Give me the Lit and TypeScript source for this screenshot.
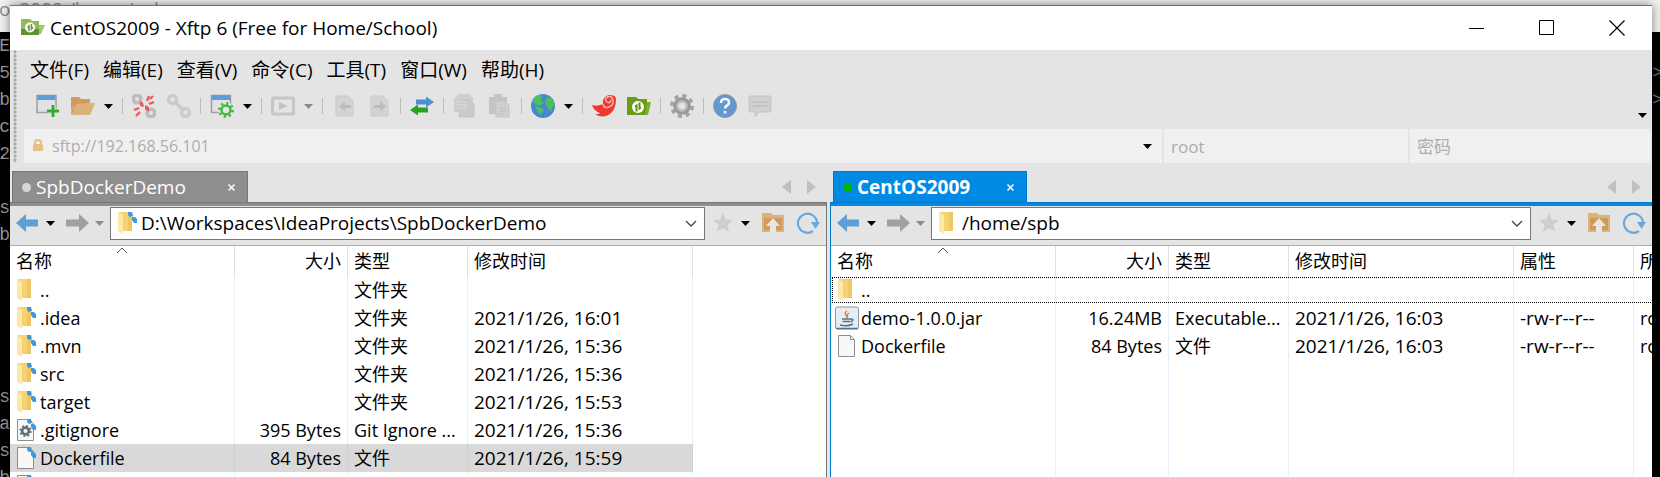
import { LitElement, html, svg, css, nothing } from "lit";
import { customElement, property } from "lit/decorators.js";
import { classMap } from "lit/directives/class-map.js";

const FONT = css`"Open Sans", "Noto Sans CJK SC", sans-serif`;

const shapes: Record<string, unknown> = {
  app: svg`<path d="M0 3h9l2 2h7v14H0z" fill="#8fbb58"/><path d="M0 13h18v6H0z" fill="#5d9133"/><path d="M18 9h6l-4 9h-2z" fill="#a3c763"/><circle cx="9" cy="11.500" r="5" fill="#fff"/><path d="M8 15v-5l-1.500 1.500M10.500 8v5l1.500-1.500" stroke="#5d9133" stroke-width="1.500" fill="none"/>`,
  newSession: svg`<path d="M1 1.500h19v17H1z" fill="#e2e2e4" stroke="#9a9fa6" stroke-width="1.500"/><path d="M1.500 1h18v5h-18z" fill="#5c9fd8"/><path d="M17 11v12M11 17h12" stroke="#e5e5e5" stroke-width="5"/><path d="M17 11v12M11 17h12" stroke="#2fae2a" stroke-width="2.800"/>`,
  open: svg`<path d="M0 3h8l2 2h9v5H5L0 20z" fill="#cf9c5d"/><path d="M5 9h19l-5 12H0V14z" fill="#dbb27a"/><path d="M1 19 5 9h9" stroke="#c99457" fill="none"/>`,
  disconnect: svg`<g fill="none" stroke="#bdbdbd" stroke-width="3.600"><circle cx="5" cy="5" r="3.800"/><circle cx="19" cy="19" r="3.800"/><path d="M7 7l3 3M14 14l3 3"/></g><g stroke="#e9565c" stroke-width="2.200" fill="none"><path d="M15 7l2-5M17 10l5-2M2 16l5-2M4 22l4-4M18 5l3-3"/></g><path d="M8 7l3 2 1 4-4-1zM13 11l4 2 0 5-4-3z" fill="#e9565c"/>`,
  link: svg`<g fill="none" stroke="#cbcbcb" stroke-width="3.400"><circle cx="5.500" cy="5.500" r="4"/><circle cx="18.500" cy="18.500" r="4"/><path d="M8 8l8 8"/></g>`,
  sessionGear: svg`<path d="M1.500 1.500h19v17h-19z" fill="#e2e2e4" stroke="#9a9fa6" stroke-width="1.500"/><path d="M2 1h18v5H2z" fill="#5c9fd8"/><circle cx="16" cy="16" r="8" fill="#e5e5e5"/><circle cx="16" cy="16" r="4.500" fill="none" stroke="#43b93c" stroke-width="2.400"/><circle cx="16" cy="16" r="6.700" fill="none" stroke="#43b93c" stroke-width="2.600" stroke-dasharray="2.260 3"/>`,
  play: svg`<rect x="1.500" y="4" width="21" height="16" rx="1" fill="none" stroke="#c6c6c6" stroke-width="3"/><path d="M8 8l9 4-9 4z" fill="#c2c2c2"/>`,
  docLeft: svg`<path d="M4 2h12l5 5v15H4z" fill="#d3d3d3" stroke="#cbcbcb"/><path d="M7 12.500l6-5v3.500h6v3h-6v3.500z" fill="#bcbcbc"/>`,
  docRight: svg`<path d="M4 2h12l5 5v15H4z" fill="#d3d3d3" stroke="#cbcbcb"/><path d="M19 12.500l-6-5v3.500H7v3h6v3.500z" fill="#bcbcbc"/>`,
  transfer: svg`<path d="M6 5.500h10V2.500l8 5.500-8 5.500v-3H6z" fill="#4e8fd2"/><path d="M18 13.500H8v-3L0 16l8 5.500v-3h10z" fill="#27a324"/>`,
  copy: svg`<path d="M6 0h10l4 4v14H1V5z" fill="#cecece"/><path d="M8 6h9l4 4v13H6z" fill="#cacaca" stroke="#c4c4c4"/><path d="M4 8h10M4 11h10M4 14h10" stroke="#dedede"/>`,
  paste: svg`<path d="M1 3h5V0h8v3h5v17H1z" fill="#c4c4c4"/><path d="M8 7h9l4 4v12H8z" fill="#d0d0d0" stroke="#c4c4c4"/><path d="M11 14h7M11 17h7M11 20h5" stroke="#bdbdbd"/>`,
  globe: svg`<circle cx="12" cy="12" r="12" fill="#4787cf"/><path d="M2 5q4-5 9-4l-1 5 3 3-5 3-4-2-2-2zM15 4l5-1 4 7-3 4-1 4-3-4-3-5zM4 12l7 2 2 3-4 4-2-3z" fill="#4fbd62"/>`,
  shell: svg`<path d="M0 11q5 2 11-1-1-7 6-9 7 0 7 4 0 10-6 15-8 5-15 0 3 1 5-1-6-2-8-8z" fill="#ef362f"/><path d="M11 10q1 5 6 3t4-7-6-3q-3 3 0 5t4-2" fill="none" stroke="#f5b5b0" stroke-width="1.500"/>`,
  xftp: svg`<path d="M0 3h9l2 2h9v16H0z" fill="#6c9c12"/><path d="M20 8h4l-3 13h-3z" fill="#7fb02a"/><circle cx="11" cy="13" r="6" fill="#fff"/><path d="M9.500 17.500v-6L8 12.500M12.500 8.500v6l1.500-1" stroke="#5f9010" stroke-width="2" fill="none"/>`,
  gear: svg`<circle cx="12" cy="12" r="6.300" fill="none" stroke="#989898" stroke-width="5"/><circle cx="12" cy="12" r="10" fill="none" stroke="#a2a2a2" stroke-width="4" stroke-dasharray="4 3.854"/><circle cx="12" cy="12" r="5" fill="none" stroke="#c2c2c2" stroke-width="1.500"/>`,
  help: svg`<circle cx="12" cy="12" r="11.500" fill="#6297cf" stroke="#8c9cae"/><path d="M8 9q0-4 4-4t4 3.500q0 2-2 3t-2 3M12 17v2.500" fill="none" stroke="#f2f5fa" stroke-width="2.600"/>`,
  chat: svg`<path d="M2 2h20q1 0 1 2v12q0 2-2 2H11l-4 5v-5H3q-2 0-2-2V4q0-2 1-2z" fill="#d0d0d0" stroke="#c4c4c4"/><path d="M5 8h14M5 12h14" stroke="#bdbdbd" stroke-width="1.500"/>`,
  back: svg`<path d="M0 12L10 3v5.500h12v7H10V21z" fill="#5f9fd6"/>`,
  forward: svg`<path d="M24 12L14 3v5.500H1v7h13V21z" fill="#a0a0a0"/>`,
  star: svg`<path d="M12 2l2.800 6.500 7.200.6-5.500 4.700 1.700 7L12 17l-6.200 3.800 1.700-7L2 9.100l7.200-.6z" fill="#cecece"/>`,
  up: svg`<path d="M1 2h9l2 2h11v17H1z" fill="#dbb27a"/><path d="M3 7h18v12H3z" fill="#ce9b5d"/><path d="M12 7l7 8h-4v7H9v-7H5z" fill="#e9e6e2"/>`,
  refresh: svg`<path d="M17 20a9.500 9.500 0 1 1 4-8" fill="none" stroke="#6aa7dc" stroke-width="2.200"/><path d="M15 11h9l-4.500 7z" fill="#6aa7dc"/>`,
  lock: svg`<path d="M9 11V9q0-3 3-3t3 3v2" fill="none" stroke="#e6c088" stroke-width="2"/><rect x="7" y="10" width="10" height="7" rx="1" fill="#e6c088"/>`,
  folder: svg`<path d="M4 1h13v19H4z" fill="#f5d274"/><path d="M13 1h4v19h-4z" fill="#eec764"/><path d="M3 1l5 3v19l-5-3z" fill="#fde8a6"/>`,
  file: svg`<path d="M3.500 1.500h12l4 4v17h-16z" fill="#f8f8f8" stroke="#8d8d8d"/><path d="M15.500 1.500v4h4" fill="none" stroke="#8d8d8d"/>`,
  config: svg`<path d="M3.500 1.500h12l4 4v17h-16z" fill="#f8f8f8" stroke="#8d8d8d"/><circle cx="11.500" cy="13" r="3.400" fill="none" stroke="#5f6f78" stroke-width="2.600"/><circle cx="11.500" cy="13" r="5.200" fill="none" stroke="#5f6f78" stroke-width="1.800" stroke-dasharray="2 2.080"/>`,
  jar: svg`<rect x=".5" y="1" width="23" height="22" rx="2" fill="#e9edf1" stroke="#8797a6"/><path d="M1 22.500h22" stroke="#5f7486" stroke-width="1.500"/><path d="M12 5q-3 2-1 4t0 3M14 7q-3 2-1 4" fill="none" stroke="#e8772e" stroke-width="1.400"/><path d="M7 13h9M7.500 15.500h8M5 19q7 2 13-1M16 13q4 0 0 3" fill="none" stroke="#4b7795" stroke-width="1.500"/>`,
};
const badge = svg`<path d="M13 1h4l1 4-3 1-2-2zM17 6h3l2 2v4h-3l-2-3z" fill="#3f97e0"/>`;

const icon = (name: string, linked = false) => html`<svg width="24" height="24" viewBox="0 0 24 24" aria-hidden="true">${shapes[name]}${linked ? badge : nothing}</svg>`;
const caret = (color = "#000") => html`<svg width="9" height="5" viewBox="0 0 9 5" aria-hidden="true"><path d="M0 0h9L4.500 5z" fill=${color} /></svg>`;

const reset = css`
  * { box-sizing: border-box; }
  svg { display: block; flex: none; }
  button { appearance: none; border: 0; margin: 0; padding: 0; background: none; color: inherit; font: inherit; display: flex; align-items: center; justify-content: center; flex: none; }
  input { appearance: none; border: 0; margin: 0; padding: 0; outline: 0; background: none; color: inherit; font: inherit; flex: 1; min-width: 0; width: 100%; }
`;

interface Entry { icon: string; linked?: boolean; name: string; size?: string; type?: string; date?: string; attr?: string; owner?: string; }

@customElement("file-pane")
class FilePane extends LitElement {
  @property() tab = "";
  @property() path = "";
  @property({ type: Boolean }) active = false;
  @property({ type: Boolean }) linked = false;
  @property({ type: Boolean }) remote = false;
  @property({ type: Number }) selected = -1;
  @property({ attribute: false }) entries: Entry[] = [];

  static styles = [reset, css`
    :host { display: flex; flex-direction: column; min-width: 0; overflow: hidden; }
    .tabs { display: flex; align-items: flex-end; height: 38px; padding: 0 11px 0 2px; }
    .tabs.active { padding-left: 3px; }
    .tab { display: flex; align-items: center; gap: 5px; width: 236px; height: 31px; padding: 0 11px 0 9px; background: #8e8e8e; border: 1px solid #777; border-bottom: 0; color: #fff; font-size: 19px; }
    .tab span { flex: 1; text-align: left; }
    .active .tab { width: 194px; background: #008ae4; border-color: #0078cc; font-weight: 700; }
    .dot { width: 9px; height: 9px; border-radius: 50%; background: #d6d6d6; }
    .active .dot { background: #00b400; }
    .scroll { display: flex; gap: 16px; margin-left: auto; height: 31px; align-items: center; }
    .body { flex: 1; display: flex; flex-direction: column; min-height: 0; border-right: 1px solid #777; background: #fff; }
    .body.active { border-right: 0; border-left: 1px solid #0078cc; }
    .stripe { height: 4px; flex: none; background: #8e8e8e; border-top: 1px solid #777; }
    .active .stripe { background: #008ae4; border-color: #0078cc; }
    .bar { display: flex; align-items: center; height: 40px; flex: none; padding: 0 6px 5px; background: #e4e4e4; border-bottom: 1px solid #adadad; }
    .nav { display: flex; align-items: center; gap: 6px; padding-right: 6px; }
    .nav .ahead { margin-left: 4px; }
    .combo { flex: 1; min-width: 0; display: flex; align-items: center; height: 33px; padding: 0 7px 0 4px; gap: 2px; background: #fff; border: 1px solid #777; font-size: 19px; color: #000; }
    .tools { display: flex; align-items: center; gap: 6px; padding-left: 6px; }
    .tools .go { margin-left: 5px; }
    .list { flex: 1; min-height: 0; overflow: hidden; }
    table { table-layout: fixed; border-collapse: separate; border-spacing: 0; width: 683px; height: 100%; font-size: 18px; line-height: 28px; color: #000; }
    table.remote { width: 923px; }
    .w-name, .w-date { width: 225px; }
    .w-size { width: 113px; }
    .w-type, .w-attr { width: 120px; }
    th { height: 30px; padding: 0 6px; text-align: left; font-weight: 400; border-right: 1px solid #e0e0e0; position: relative; }
    td { height: 28px; padding: 0 6px; white-space: nowrap; overflow: hidden; text-overflow: ellipsis; border-right: 1px solid #e5f0fb; }
    td.date, td.attr { font-size: 19px; }
    .rest td { height: auto; padding: 0; }
    .size { text-align: right; }
    td.name { padding: 0 4px; }
    .label { display: flex; align-items: center; gap: 2px; }
    tr.on { background: #d9d9d9; }
    tr.on td { border-color: #c8d3df; }
    tr.focus { outline: 1px dotted #000; outline-offset: -2px; }
    .sort { position: absolute; left: calc(50% - 6px); top: 1px; }
  `];

  render() {
    const cols = ["name", "size", "type", "date", ...(this.remote ? ["attr", "owner"] : [])];
    const heads: Record<string, string> = { name: "名称", size: "大小", type: "类型", date: "修改时间", attr: "属性", owner: "所有者" };
    return html`
      <div class=${classMap({ tabs: true, active: this.active })}>
        <button class="tab"><i class="dot"></i><span>${this.tab}</span>
          <svg width="9" height="9" viewBox="0 0 9 9" aria-hidden="true"><path d="M1.500 1.500l6 6M7.500 1.500l-6 6" stroke="#fff" stroke-width="1.500" /></svg>
        </button>
        <div class="scroll">
          <button aria-label="Previous tab"><svg width="9" height="14" viewBox="0 0 9 14"><path d="M9 0v14L0 7z" fill="#bfbfbf" /></svg></button>
          <button aria-label="Next tab"><svg width="9" height="14" viewBox="0 0 9 14"><path d="M0 0v14l9-7z" fill="#bfbfbf" /></svg></button>
        </div>
      </div>
      <div class=${classMap({ body: true, active: this.active })}>
        <div class="stripe"></div>
        <div class="bar">
          <div class="nav">
            <button aria-label="Back">${icon("back")}</button>
            <button aria-label="Back history">${caret()}</button>
            <button class="ahead" aria-label="Forward">${icon("forward")}</button>
            <button aria-label="Forward history">${caret("#8a8a8a")}</button>
          </div>
          <label class="combo">${icon("folder", this.linked)}
            <input aria-label="Path" .value=${this.path} />
            <svg width="12" height="7" viewBox="0 0 12 7" aria-hidden="true"><path d="M1 1l5 5 5-5" fill="none" stroke="#444" stroke-width="1.300" /></svg>
          </label>
          <div class="tools">
            <button aria-label="Favorite">${icon("star")}</button>
            <button aria-label="Favorites">${caret()}</button>
            <button class="go" aria-label="Parent folder">${icon("up")}</button>
            <button class="go" aria-label="Refresh">${icon("refresh")}</button>
          </div>
        </div>
        <div class="list">
          <table class=${classMap({ remote: this.remote })}>
            <thead><tr>${cols.map((c) => html`<th class="${c} w-${c}">${heads[c]}${c === "name" ? html`<svg class="sort" width="12" height="7" viewBox="0 0 12 7" aria-hidden="true"><path d="M1 6l5-5 5 5" fill="none" stroke="#555" /></svg>` : nothing}</th>`)}</tr></thead>
            <tbody>${this.entries.map((e, i) => html`
              <tr class=${classMap({ on: i === this.selected, focus: this.remote && i === 0 })}>
                ${cols.map((c) => c === "name"
                  ? html`<td class="name"><div class="label">${icon(e.icon, e.linked)}${e.name}</div></td>`
                  : html`<td class=${c}>${(e as any)[c] ?? ""}</td>`)}
              </tr>`)}
              <tr class="rest" aria-hidden="true">${cols.map(() => html`<td></td>`)}</tr>
            </tbody>
          </table>
        </div>
      </div>`;
  }
}

const local: Entry[] = [
  { icon: "folder", name: "..", type: "文件夹" },
  { icon: "folder", linked: true, name: ".idea", type: "文件夹", date: "2021/1/26, 16:01" },
  { icon: "folder", linked: true, name: ".mvn", type: "文件夹", date: "2021/1/26, 15:36" },
  { icon: "folder", linked: true, name: "src", type: "文件夹", date: "2021/1/26, 15:36" },
  { icon: "folder", linked: true, name: "target", type: "文件夹", date: "2021/1/26, 15:53" },
  { icon: "config", linked: true, name: ".gitignore", size: "395 Bytes", type: "Git Ignore ...", date: "2021/1/26, 15:36" },
  { icon: "file", linked: true, name: "Dockerfile", size: "84 Bytes", type: "文件", date: "2021/1/26, 15:59" },
  { icon: "file", linked: true, name: "" },
];
const remote: Entry[] = [
  { icon: "folder", name: ".." },
  { icon: "jar", name: "demo-1.0.0.jar", size: "16.24MB", type: "Executable...", date: "2021/1/26, 16:03", attr: "-rw-r--r--", owner: "root" },
  { icon: "file", name: "Dockerfile", size: "84 Bytes", type: "文件", date: "2021/1/26, 16:03", attr: "-rw-r--r--", owner: "root" },
];

const menus = ["文件(F)", "编辑(E)", "查看(V)", "命令(C)", "工具(T)", "窗口(W)", "帮助(H)"];
const tools = ["newSession", "open", "caret", "sep", "disconnect", "link", "sep", "sessionGear", "caret", "sep", "play", "caretOff", "sep", "docLeft", "docRight", "sep", "transfer", "sep", "copy", "paste", "sep", "globe", "caret", "sep", "shell", "xftp", "sep", "gear", "sep", "help", "chat"];
const gutter: [string, string][] = [["CE", ""], ["95", "amber"], ["6b", "amber"], ["nc", "red"], ["22", "amber"], ["", ""], ["os", "amber"], ["lb", "amber"], [": ", "amber"], [": ", "amber"], [": ", "amber"], ["", ""], ["o ", "blue"], [".s", ""], ["'a", ""], ["os", "amber"], ["lb", ""]];

@customElement("app-root")
class AppRoot extends LitElement {
  static styles = [reset, css`
    :host { display: grid; grid-template-columns: 10px minmax(0, 1fr) 8px; height: 100vh; overflow: hidden; position: relative; padding-top: 5px; background: linear-gradient(#f3f3f3 32px, #000 32px); font-family: ${FONT}; color: #000; }
    .behind { position: absolute; left: -1px; top: -4px; font-size: 19px; line-height: 26px; color: #8c8c8c; }
    .term { padding-top: 28px; overflow: hidden; font: 18px/27px "Liberation Mono", monospace; color: #9a9a9a; display: flex; flex-direction: column; align-items: flex-end; white-space: pre; }
    .term span { display: block; height: 27px; flex: none; }
    .term.right { align-items: flex-start; padding-top: 55px; color: #777; }
    .term b { font-weight: 400; }
    .amber { color: #b8752a; } .red { color: #b01818; } .blue { color: #4aa0d0; }
    .window { display: flex; flex-direction: column; min-height: 0; position: relative; background: #e4e4e4; border-top: 1px solid #707070; box-shadow: 0 0 10px rgba(0, 0, 0, 0.5); }
    .title { display: flex; align-items: center; height: 44px; flex: none; background: #fff; padding-left: 11px; font-size: 19px; }
    h1 { font: inherit; margin: 0; padding-left: 5px; flex: 1; }
    .title button { width: 70px; height: 44px; }
    .chrome { display: flex; }
    .grip { width: 14px; flex: none; background: radial-gradient(circle at 5px 2px, #a8a8a8 1px, transparent 2px) 0 0 / 14px 4px; }
    .bars { flex: 1; min-width: 0; }
    .menu { display: flex; gap: 14px; padding: 0 6px; height: 37px; font-size: 19px; }
    .toolbar { display: flex; align-items: center; gap: 9px; height: 42px; padding: 0 5px 4px 12px; }
    .toolbar .icon + .icon { margin-left: 2px; }
    .sep { width: 1px; height: 16px; background: #bdbdbd; }
    .more { margin: 18px 0 0 auto; }
    .address { display: grid; grid-template-columns: 1138fr 244fr 241fr; gap: 2px; padding-right: 1px; font-size: 17px; color: #adadad; }
    .field { display: flex; align-items: center; min-width: 0; height: 34px; padding: 0 7px; background: #f0f0f0; }
    .host { padding: 0 10px 0 2px; gap: 2px; font-size: 16px; }
    .field ::placeholder { color: inherit; opacity: 1; }
    .panes { flex: 1; min-height: 0; padding-top: 1px; display: grid; grid-template-columns: 817fr 822fr; gap: 3px; }
  `];

  render() {
    return html`
      <div class="behind">os2009:/home/spb</div>
      <div class="term">${gutter.map(([t, c]) => html`<span><b class=${c}>${t.slice(0, 1)}</b>${t.slice(1)}</span>`)}</div>
      <main class="window">
        <div class="title">
          ${icon("app")}<h1>CentOS2009 - Xftp 6 (Free for Home/School)</h1>
          <button aria-label="Minimize"><svg width="16" height="16"><path d="M0 8.500h15" stroke="#000" /></svg></button>
          <button aria-label="Maximize"><svg width="16" height="16"><path d="M.5.500h14v14H.5z" fill="none" stroke="#000" /></svg></button>
          <button aria-label="Close"><svg width="16" height="16"><path d="M.5.500l15 15M15.500.500l-15 15" stroke="#000" stroke-width="1.200" /></svg></button>
        </div>
        <div class="chrome">
          <div class="grip"></div>
          <div class="bars">
            <nav class="menu">${menus.map((m) => html`<button>${m}</button>`)}</nav>
            <div class="toolbar">
              ${tools.map((t) => t === "sep" ? html`<i class="sep"></i>`
                : t === "caret" || t === "caretOff" ? html`<button aria-label="More">${caret(t === "caret" ? "#000" : "#8a8a8a")}</button>`
                : html`<button class="icon" aria-label=${t}>${icon(t)}</button>`)}
              <button class="more" aria-label="Toolbar options">${caret()}</button>
            </div>
            <div class="address">
              <label class="field host">${icon("lock")}<input aria-label="Host" .value=${"sftp://192.168.56.101"} />${caret()}</label>
              <label class="field"><input aria-label="User" .value=${"root"} /></label>
              <label class="field"><input type="password" aria-label="密码" placeholder="密码" /></label>
            </div>
          </div>
        </div>
        <div class="panes">
          <file-pane tab="SpbDockerDemo" path="D:\\Workspaces\\IdeaProjects\\SpbDockerDemo" linked .selected=${6} .entries=${local}></file-pane>
          <file-pane tab="CentOS2009" path="/home/spb" active remote .entries=${remote}></file-pane>
        </div>
      </main>
      <div class="term right"><span>&gt;</span><span>&gt;</span></div>`;
  }
}
